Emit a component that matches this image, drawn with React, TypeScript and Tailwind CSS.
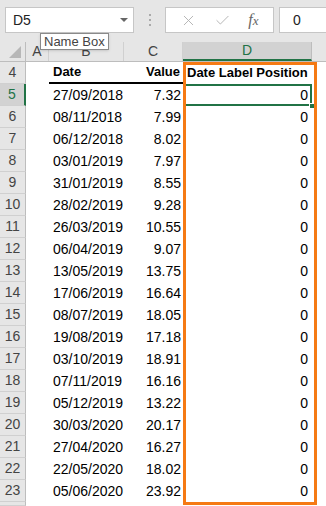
import { X, Check } from 'lucide-react';

const rows: [string, string][] = [
  ['27/09/2018', '7.32'],
  ['08/11/2018', '7.99'],
  ['06/12/2018', '8.02'],
  ['03/01/2019', '7.97'],
  ['31/01/2019', '8.55'],
  ['28/02/2019', '9.28'],
  ['26/03/2019', '10.55'],
  ['06/04/2019', '9.07'],
  ['13/05/2019', '13.75'],
  ['17/06/2019', '16.64'],
  ['08/07/2019', '18.05'],
  ['19/08/2019', '17.18'],
  ['03/10/2019', '18.91'],
  ['07/11/2019', '16.16'],
  ['05/12/2019', '13.22'],
  ['30/03/2020', '20.17'],
  ['27/04/2020', '16.27'],
  ['22/05/2020', '18.02'],
  ['05/06/2020', '23.92'],
];

function RowHead({ n, active }: { n: number | string; active?: boolean }) {
  return (
    <div
      className={`w-[26px] h-full flex-shrink-0 flex items-center justify-center border-b border-[#d0d0d0] text-[14px] ${
        active
          ? 'bg-[#d2d2d2] text-[#217346] border-r-2 border-r-[#217346]'
          : 'bg-[#e6e6e6] text-[#444] border-r border-r-[#bdbdbd]'
      }`}
    >
      {n}
    </div>
  );
}

export default function App() {
  return (
    <div
      className="relative w-[326px] h-[506px] overflow-hidden bg-white flex flex-col"
      style={{ fontFamily: '"Liberation Sans", Arial, sans-serif' }}
    >
      {/* Formula bar */}
      <div className="h-[42px] flex-shrink-0 bg-[#e6e6e6] flex items-start pt-[7px] pl-[5px]">
        <div className="w-[129px] h-[26px] bg-white border border-[#c6c6c6] flex items-center pl-[7px] pr-[5px] justify-between">
          <span className="text-[14px] text-[#222]">D5</span>
          <span className="w-0 h-0 border-l-[4px] border-r-[4px] border-t-[4px] border-l-transparent border-r-transparent border-t-[#666]" />
        </div>
        <div className="w-[31px] h-[26px] flex flex-col items-center justify-center gap-[3px]">
          <span className="w-[2px] h-[2px] bg-[#aaa]" />
          <span className="w-[2px] h-[2px] bg-[#aaa]" />
          <span className="w-[2px] h-[2px] bg-[#aaa]" />
        </div>
        <div className="w-[109px] h-[26px] bg-white border border-[#c6c6c6] flex items-center justify-around px-[6px]">
          <X size={17} strokeWidth={1.3} className="text-[#b0b0b0]" />
          <Check size={17} strokeWidth={1.3} className="text-[#b0b0b0]" />
          <span
            className="text-[16px] italic text-[#666]"
            style={{ fontFamily: '"Liberation Serif", "Times New Roman", serif' }}
          >
            f<span className="text-[13px]">x</span>
          </span>
        </div>
        <div className="ml-[5px] flex-1 h-[26px] bg-white border border-[#c6c6c6] border-r-0 flex items-center pl-[13px] text-[14px] text-[#222]">
          0
        </div>
      </div>

      {/* Column headers */}
      <div className="h-[20px] flex-shrink-0 flex bg-[#e6e6e6] border-b border-[#bdbdbd] text-[14px] text-[#444]">
        <div className="w-[26px] flex-shrink-0 border-r border-[#bdbdbd] flex items-end justify-end pr-[4px] pb-[3px]">
          <svg width="12" height="12" viewBox="0 0 12 12">
            <polygon points="12,0 12,12 0,12" fill="#b7b7b7" />
          </svg>
        </div>
        <div className="w-[23px] flex-shrink-0 border-r border-[#d0d0d0] flex items-center justify-center">A</div>
        <div className="w-[75px] flex-shrink-0 border-r border-[#d0d0d0] flex items-center justify-center">B</div>
        <div className="w-[59px] flex-shrink-0 border-r border-[#d0d0d0] flex items-center justify-center">C</div>
        <div className="w-[129px] flex-shrink-0 bg-[#d2d2d2] border-r border-[#bdbdbd] border-b-2 border-b-[#217346] flex items-center justify-center text-[#217346]">
          D
        </div>
        <div className="flex-1" />
      </div>

      {/* Header row 4 */}
      <div className="h-[22px] flex-shrink-0 flex">
        <RowHead n={4} />
        <div className="w-[23px] flex-shrink-0" />
        <div className="w-[75px] flex-shrink-0 border-b-2 border-black flex items-center pl-[4px] text-[13px] font-bold">
          Date
        </div>
        <div className="w-[59px] flex-shrink-0 border-b-2 border-black flex items-center justify-end pr-[3px] text-[13px] font-bold">
          Value
        </div>
        <div className="w-[129px] flex-shrink-0 flex items-center pl-[4px] text-[13px] font-bold whitespace-nowrap">
          Date Label Position
        </div>
      </div>

      {/* Data rows */}
      {rows.map(([d, v], i) => (
        <div key={i} className="h-[22px] flex-shrink-0 flex text-[14px] text-black">
          <RowHead n={i + 5} active={i === 0} />
          <div className="w-[23px] flex-shrink-0" />
          <div className="w-[75px] flex-shrink-0 flex items-center pl-[4px]">{d}</div>
          <div className="w-[59px] flex-shrink-0 flex items-center justify-end pr-[2px]">{v}</div>
          <div className="w-[129px] flex-shrink-0 flex items-center justify-end pr-[4px] relative">
            0
            {i === 0 && (
              <>
                <span className="absolute inset-0 border-2 border-[#217346]" />
                <span className="absolute right-[-3px] bottom-[-3px] w-[6px] h-[6px] bg-[#217346] border border-white" />
              </>
            )}
          </div>
        </div>
      ))}
      <div className="flex-1 flex">
        <RowHead n="" />
      </div>

      {/* Orange highlight box */}
      <div className="absolute left-[183px] top-[62px] w-[134px] h-[443px] border-[3px] border-[#f57a14] pointer-events-none" />

      {/* Tooltip */}
      <div className="absolute left-[40px] top-[33px] h-[17px] px-[3px] bg-white border border-[#8a8a8a] text-[13px] leading-[15px] text-[#444] shadow-sm whitespace-nowrap">
        Name Box
      </div>
    </div>
  );
}
